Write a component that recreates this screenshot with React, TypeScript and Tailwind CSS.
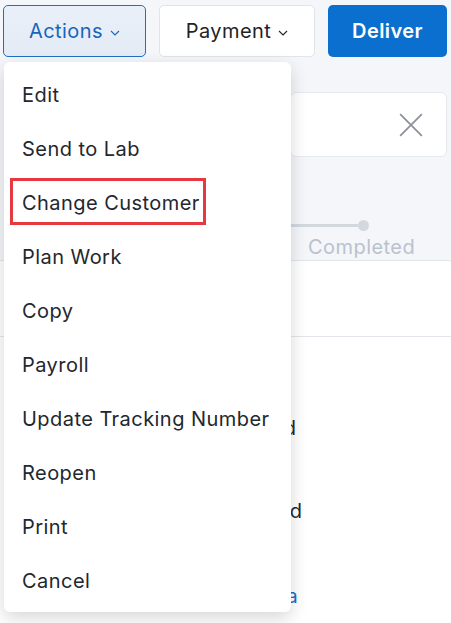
import React from 'react';

const items = [
  'Edit',
  'Send to Lab',
  'Change Customer',
  'Plan Work',
  'Copy',
  'Payroll',
  'Update Tracking Number',
  'Reopen',
  'Print',
  'Cancel',
];

const Chevron = ({ className }: { className?: string }) => (
  <svg viewBox="0 0 10 6" className={className} fill="none" stroke="currentColor" strokeWidth="1.1">
    <path d="M1 1l4 4 4-4" />
  </svg>
);

export default function App() {
  return (
    <div className="relative h-[623px] w-[451px] overflow-hidden bg-[#f4f6f9] font-['Inter',sans-serif] tracking-[0.45px] text-[#23272e]">
      {/* toolbar */}
      <div className="flex gap-[13px] pl-[3px] pt-[5px]">
        <button className="flex h-[52px] w-[143px] items-center justify-center gap-[7px] rounded-[5px] border border-[#1f6fc6] bg-gradient-to-b from-[#e9f0f9] to-[#e3ebf5] text-[20px] text-[#1a64ba]">
          Actions
          <Chevron className="mt-[3px] h-[6px] w-[10px]" />
        </button>
        <button className="flex h-[52px] w-[156px] items-center justify-center gap-[7px] rounded-[5px] border border-[#e1e4e9] bg-white text-[20px] text-[#1f2329]">
          Payment
          <Chevron className="mt-[3px] h-[6px] w-[10px]" />
        </button>
        <button className="flex h-[52px] w-[119px] items-center justify-center rounded-[5px] bg-[#0b6fcf] text-[20px] font-semibold text-white">
          Deliver
        </button>
      </div>

      {/* page content behind the menu */}
      <div className="mt-[35px] pl-[290px] pr-[4px]">
        <div className="flex h-[65px] items-center justify-end rounded-[6px] border border-[#e6e9ed] bg-white pr-[22px]">
          <svg viewBox="0 0 24 24" className="h-[26px] w-[26px] text-[#8b9099]" fill="none" stroke="currentColor" strokeWidth="1.6">
            <path d="M2 2l20 20M22 2L2 22" />
          </svg>
        </div>
      </div>
      <div className="relative mt-[63px] h-[40px] pl-[290px]">
        <div className="flex items-center">
          <div className="h-[3px] w-[68px] bg-[#d3d8df]" />
          <div className="h-[11px] w-[11px] rounded-full bg-[#d3d8df]" />
        </div>
        <div className="mt-[4px] pl-[18px] text-[20px] leading-[24px] text-[#b9c2cf]">Completed</div>
      </div>
      <div className="h-[1px] bg-[#e3e6ea]" />
      <div className="h-[75px] bg-white" />
      <div className="h-[1px] bg-[#e3e6ea]" />
      <div className="h-[300px] bg-white pt-[77px] text-[20px] text-[#23272e]">
        <div className="pl-[206px] leading-[28px]">Received</div>
        <div className="mt-[55px] pl-[209px] leading-[28px]">Delivered</div>
        <div className="mt-[57px] pl-[238px] leading-[28px] text-[#1a6fc4]">Media</div>
      </div>

      {/* dropdown menu */}
      <div className="absolute left-[4px] top-[62px] w-[287px] rounded-[6px] bg-white py-[5px] shadow-[0_6px_18px_rgba(0,0,0,0.16)]">
        {items.map((item) => (
          <div key={item} className="flex h-[54px] items-center pl-[18px] pt-[2px] text-[20px] text-[#23272e]">
            {item}
          </div>
        ))}
        <div className="absolute left-[6px] top-[116px] h-[47px] w-[196px] border-[3px] border-[#e5383f]" />
      </div>
    </div>
  );
}
